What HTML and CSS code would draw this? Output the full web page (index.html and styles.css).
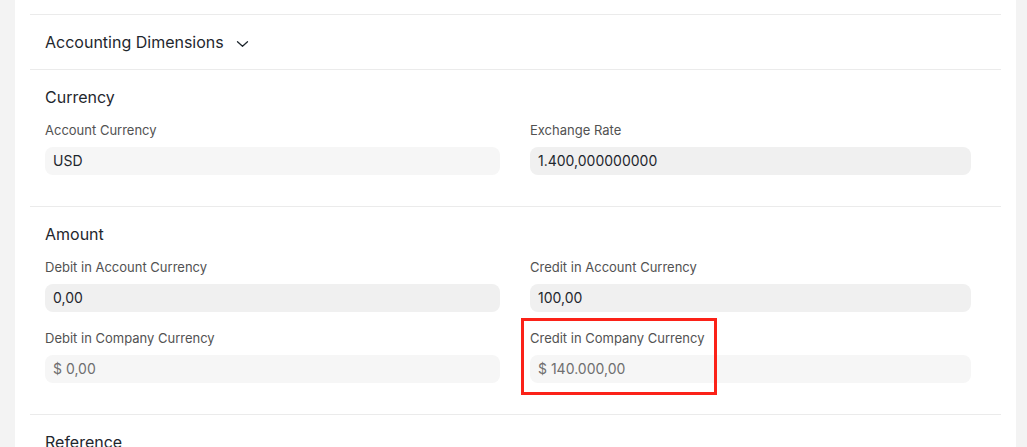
FILE: index.html
```html
<!DOCTYPE html>
<html>
<head>
<meta charset="utf-8">
<link rel="stylesheet" href="styles.css">
</head>
<body>
<div class="page">
  <div class="card">
    <div class="top-spacer"></div>
    <section class="section collapsed">
      <div class="section-head">Accounting Dimensions
        <svg class="chevron" width="13" height="12" viewBox="0 0 13 12"><path d="M1.5 3.8 L6.5 8.3 L11.5 3.8" fill="none" stroke="#1f272e" stroke-width="1.3" stroke-linecap="round" stroke-linejoin="round"/></svg>
      </div>
    </section>
    <section class="section">
      <div class="section-head">Currency</div>
      <div class="grid">
        <div class="col">
          <div class="field">
            <div class="label">Account Currency</div>
            <div class="control readonly dark">USD</div>
          </div>
        </div>
        <div class="col">
          <div class="field">
            <div class="label">Exchange Rate</div>
            <div class="control">1.400,000000000</div>
          </div>
        </div>
      </div>
    </section>
    <section class="section">
      <div class="section-head">Amount</div>
      <div class="grid">
        <div class="col">
          <div class="field">
            <div class="label">Debit in Account Currency</div>
            <div class="control">0,00</div>
          </div>
          <div class="field">
            <div class="label">Debit in Company Currency</div>
            <div class="control readonly">$ 0,00</div>
          </div>
        </div>
        <div class="col">
          <div class="field">
            <div class="label">Credit in Account Currency</div>
            <div class="control">100,00</div>
          </div>
          <div class="field highlighted">
            <div class="label">Credit in Company Currency</div>
            <div class="control readonly">$ 140.000,00</div>
            <div class="highlight-box"></div>
          </div>
        </div>
      </div>
    </section>
    <section class="section">
      <div class="section-head">Reference</div>
    </section>
  </div>
</div>
</body>
</html>
```

FILE: styles.css
```css
* { box-sizing: border-box; }
html, body { margin: 0; padding: 0; }
body {
  background: #f3f3f3;
  font-family: Inter, "Noto Sans", sans-serif;
  color: #1f272e;
  height: 447px;
  overflow: hidden;
}
.page {
  padding: 0 11px 0 15px;
  height: 100%;
}
.card {
  background: #ffffff;
  height: 100%;
  padding: 0 15px;
}
.top-spacer { height: 14px; }
.section {
  border-top: 1px solid #ebebeb;
  padding: 16px 0 14px 0;
}
.section.collapsed { padding-bottom: 16px; }
.section-head {
  padding-left: 15px;
  font-size: 16px;
  line-height: 22px;
  font-weight: 400;
  color: #1f272e;
  display: flex;
  align-items: center;
}
.chevron { margin-left: 12px; margin-top: 3px; }
.grid {
  margin-top: 13px;
  display: grid;
  grid-template-columns: 485px 471px;
}
.col { padding: 0 15px; }
.field { margin-bottom: 17px; position: relative; }
.label {
  font-size: 13px;
  line-height: 18px;
  color: #525252;
  margin-bottom: 8px;
}
.control {
  height: 28px;
  border-radius: 8px;
  background: #f0f0f0;
  font-size: 14px;
  line-height: 28px;
  padding: 0 8px;
  color: #1f272e;
}
.control.readonly {
  background: #f6f6f6;
  color: #6f6f6f;
}
.control.readonly.dark { color: #1f272e; }
.highlight-box {
  position: absolute;
  left: -9px;
  top: -11px;
  width: 196px;
  height: 77px;
  border: 3px solid #fb2218;
  pointer-events: none;
}
```
